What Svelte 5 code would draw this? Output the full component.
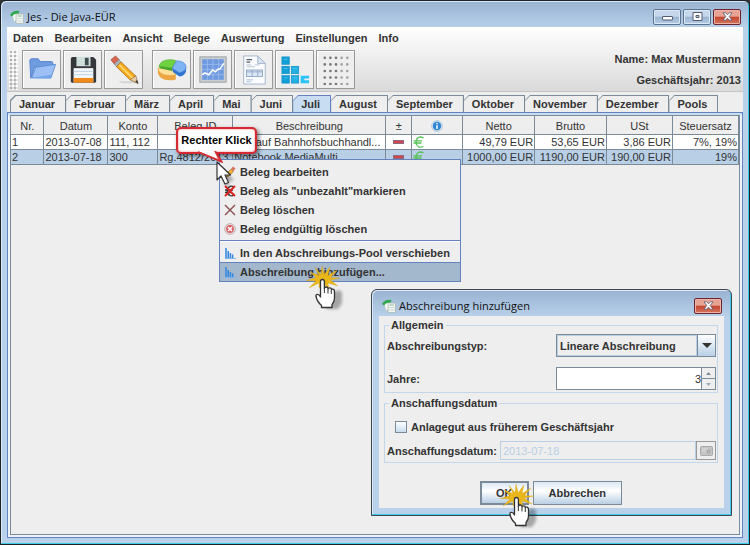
<script lang="ts">
	const menus = ['Daten', 'Bearbeiten', 'Ansicht', 'Belege', 'Auswertung', 'Einstellungen', 'Info'];
	const tabs = [
		'Januar', 'Februar', 'März', 'April', 'Mai', 'Juni', 'Juli',
		'August', 'September', 'Oktober', 'November', 'Dezember', 'Pools'
	];
	let activeTab = $state('Juli');

	const columns = [
		{ title: 'Nr.', width: 33 },
		{ title: 'Datum', width: 64 },
		{ title: 'Konto', width: 50 },
		{ title: 'Beleg ID', width: 75 },
		{ title: 'Beschreibung', width: 153 },
		{ title: '±', width: 26 },
		{ title: 'info', width: 51 },
		{ title: 'Netto', width: 72 },
		{ title: 'Brutto', width: 72 },
		{ title: 'USt', width: 66 },
		{ title: 'Steuersatz', width: 66 }
	];
	const totalWidth = columns.reduce((sum, c) => sum + c.width, 0);

	const rows = [
		{ nr: 1, datum: '2013-07-08', konto: '111, 112', beleg: '', text: 'Einkauf Bahnhofsbuchhandl...', netto: '49,79 EUR', brutto: '53,65 EUR', ust: '3,86 EUR', satz: '7%, 19%' },
		{ nr: 2, datum: '2013-07-18', konto: '300', beleg: 'Rg.4812/2013', text: 'Notebook MediaMulti', netto: '1000,00 EUR', brutto: '1190,00 EUR', ust: '190,00 EUR', satz: '19%' }
	];
	let selected = $state(2);

	let typ = $state('Lineare Abschreibung');
	let jahre = $state(3);
	let frueher = $state(false);
	let datum = $state('2013-07-18');
</script>

{#snippet logo()}
	<svg class="logo" viewBox="0 0 14 14" aria-hidden="true">
		<path d="M2 4 L8 1.5 L10 8 L4 12 Z" fill="#f6faf6" stroke="#b5c8b8" stroke-width=".6" />
		<path d="M0 5 Q3 0 9.5 1 L8.5 4 Q4 3 2 6.5 Z" fill="#2fa84f" />
		<rect x="6" y="4" width="7.5" height="9.5" rx="1" fill="#f1f5f2" stroke="#a5b3ac" stroke-width=".7" />
		<path d="M7.5 6h4.5" stroke="#a9cdb0" stroke-width="1.4" />
		<path d="M7.5 8.500h1M9.500 8.500h1M11.500 8.500h1M7.500 11h1M9.500 11h1M11.500 11h1" stroke="#b5bdb9" />
	</svg>
{/snippet}

{#snippet closeGlyph()}
	<svg width="11" height="9" viewBox="0 0 11 9" aria-hidden="true">
		<path d="M1 .8h2.7l1.8 2 1.8-2H10L7.2 4.5 10 8.2H7.3l-1.8-2-1.8 2H1l2.8-3.7z" fill="#fff" stroke="#555b70" stroke-width=".8" />
	</svg>
{/snippet}

{#snippet bars()}
	<svg viewBox="0 0 12 12" aria-hidden="true">
		<path d="M2 1V11M4.2 4V11M6.4 6V11M8.6 7.5V11" stroke="#2f86e0" stroke-width="1.5" />
		<path d="M1 11.5H12" stroke="#7db4ee" />
	</svg>
{/snippet}

{#snippet clickHand()}
	<svg width="44" height="50" viewBox="0 0 44 50" aria-hidden="true">
		<path d="M16 1l2.2 8.500L24 2l-2 8.500 9-5.500-6.500 7.500L34 13l-9.500 2L32 21l-10-3 1 6-5-5-5 4 0-5-10 5 7-7-10-.5L10 12.500 4 7l9 3.500-4-8 6 7z" fill="#e9b71c" stroke="#d39e10" stroke-width=".3" />
		<path d="M12 33l6 9h11l4-6V25l-4-2z" fill="#000" opacity=".3" filter="blur(1.5px)" transform="translate(3 2)" />
		<path d="M14.500 31V16.500Q14.500 14.500 16.400 14.500T18.400 16.500V23.500Q18.400 22 20.200 22T22 23.800Q22 22.800 23.700 22.800T25.300 24.600Q25.500 23.800 26.900 24.200T28.500 26V33Q28.500 37 26 39.500V42.500H15.500V40.500Q11 36.500 10 31.500Q9.700 29.300 11.500 29.300T14.500 32z" fill="#fff" stroke="#333" stroke-width="1.3" stroke-linejoin="round" />
		<path d="M18.400 23v5M22 24v4.500M25.300 25v4" stroke="#444" stroke-width="1.1" />
	</svg>
{/snippet}

<div class="window">
	<header class="titlebar">
		{@render logo()}
		<h1>Jes - Die Java-EÜR</h1>
		<button class="win-btn" aria-label="Minimieren">
			<svg width="11" height="9" viewBox="0 0 11 9"><rect x=".5" y="4.5" width="10" height="3.5" rx=".5" fill="#fff" stroke="#555b70" /></svg>
		</button>
		<button class="win-btn" aria-label="Maximieren">
			<svg width="11" height="9" viewBox="0 0 11 9"><path d="M1 .5h9v8H1z M4 3.5h3v2H4z" fill="#fff" fill-rule="evenodd" stroke="#555b70" /></svg>
		</button>
		<button class="win-btn close" aria-label="Schließen">{@render closeGlyph()}</button>
	</header>

	<main class="client">
		<div class="top">
			<nav class="menubar">
				{#each menus as m}
					<button>{m}</button>
				{/each}
			</nav>
			<div class="toolbar">
				<span class="grip"></span>
				<div class="tools">
					<button aria-label="Öffnen">
						<svg viewBox="0 0 32 32">
							<path d="M3 6q0-2 2-2h7l2 3h12q1.500 0 1.500 1.500V13H8L4 25z" fill="#6f9be0" stroke="#5583cc" />
							<path d="M5 24L9.500 13l21-3-5 14.500z" fill="#9cc0f5" stroke="#5d8ed8" />
							<path d="M6 24l20-3-1 4H5z" fill="#78a6ea" />
						</svg>
					</button>
					<button aria-label="Speichern">
						<svg viewBox="0 0 32 32">
							<path d="M3 4q0-2 2-2h22l3 3v23q0 1.500-1.500 1.500h-24Q3 29.500 3 28z" fill="#35373b" />
							<rect x="9" y="2" width="15" height="10" fill="#cfe0dc" />
							<rect x="18" y="3" width="4" height="8" fill="#3d4c4c" />
							<rect x="6" y="14" width="21" height="15" fill="#f4f7fa" />
							<path d="M6 17.500h21M6 21h21" stroke="#b9cfe2" />
							<rect x="6" y="24.500" width="21" height="5" fill="#f08a1c" />
						</svg>
					</button>
					<button aria-label="Bearbeiten">
						<svg viewBox="0 0 32 32">
							<path d="M10 28h18l2 2H14z" fill="#bbb" opacity=".5" />
							<path d="M2 5l5-4 4 4-5 5z" fill="#d9664e" stroke="#913b2a" stroke-width=".6" />
							<path d="M5.500 9.500L10.500 5l3 3-5 5z" fill="#aab2b5" stroke="#757b80" stroke-width=".6" />
							<path d="M8 12.500L13 7.500l15.500 15-6 4z" fill="#f5a91e" stroke="#a96908" stroke-width=".8" />
							<path d="M11 10.500l14.500 14.500" stroke="#ffd66e" stroke-width="2" />
							<path d="M22.500 26.500l6-4.500 2.500 8.500z" fill="#e9cda0" stroke="#86633a" stroke-width=".7" />
							<path d="M28 28l2-1 1.200 4z" fill="#222" />
						</svg>
					</button>
				</div>
				<div class="tools">
					<button aria-label="Kreisdiagramm">
						<svg viewBox="0 0 32 32">
							<path d="M1 14v6q3 7 13 7 4 0 6-1v-6z" fill="#eda544" />
							<path d="M1 14q0 7 12 8 5 0 7-1l-4-7z" fill="#ffdf9a" stroke="#e4982c" stroke-width=".6" />
							<path d="M2 12q2-7 12-7 4 0 6 1l-4 8z" fill="#6fd33f" stroke="#3c9e1e" stroke-width=".6" />
							<path d="M2 12l14 2v3l-13-3z" fill="#43a626" />
							<path d="M16 14l5-8q10 1 10 7 0 4-7 6z" fill="#7eb4f3" stroke="#3476cb" stroke-width=".6" />
							<path d="M16 14l8 5q7-2 7-6v4q-1 5-7 6l-7-5z" fill="#2f74d0" />
						</svg>
					</button>
					<button aria-label="Verlauf">
						<svg viewBox="0 0 32 32">
							<rect x="2" y="2" width="28" height="27" fill="#c9cdd1" stroke="#989da2" />
							<rect x="4.500" y="4.500" width="23" height="22" fill="#6f9ae0" />
							<path d="M4.500 10h23M4.500 15.500h23M4.500 21h23M10 4.500v22M16 4.500v22M22 4.500v22" stroke="#a8c5f2" stroke-width=".7" />
							<path d="M4.500 21l3-2 4 2 4-5 3 2 3-3 2 0 4-6" fill="none" stroke="#fff" stroke-width="1.600" />
						</svg>
					</button>
					<button aria-label="Bericht">
						<svg viewBox="0 0 32 32">
							<path d="M5 1h15l8 8v22H5z" fill="#fafcff" stroke="#a2b3ca" />
							<path d="M20 1v8h8z" fill="#dbe4ef" stroke="#a2b3ca" />
							<path d="M8 5h6M8 7.500h4" stroke="#555e6b" stroke-width="1.300" />
							<path d="M8 10.500h5M17 10.500h5M8 12.500h9" stroke="#b6c3d4" />
							<rect x="8" y="16" width="17" height="7" fill="#dce8f5" stroke="#91a8c5" />
							<path d="M8 18h17M14 16v7M20 16v7" stroke="#91a8c5" />
							<path d="M8 26.500h7M8 28.500h5" stroke="#a8bdd6" />
						</svg>
					</button>
					<button aria-label="Abschreibungen">
						<svg viewBox="0 0 32 32">
							<g fill="#129fd6" stroke="#0b86bd" stroke-width=".6">
								<rect x="2" y="2" width="8" height="8" />
								<rect x="2" y="12" width="8" height="8" />
								<rect x="2" y="22" width="8" height="8" />
								<rect x="12" y="12" width="8" height="8" fill="#22b0e4" />
								<rect x="12" y="22" width="8" height="8" fill="#22b0e4" />
							</g>
							<path d="M31 22h-9v8h9v-3h-5v-2h5z" fill="#2cc4f6" />
							<path d="M4 4.500h4M4 14.500h4M4 24.500h4M14 14.500h4M14 24.500h4" stroke="#4cc3ee" />
						</svg>
					</button>
					<button aria-label="Raster">
						<svg viewBox="0 0 32 32">
							{#each [4, 11, 18, 25, 32] as y}
								{#each [4, 10, 16, 22, 28] as x}
									<circle cx={x} cy={y - 1} r="1.400" fill={x < 17 ? '#777' : '#a2a2a2'} />
								{/each}
							{/each}
						</svg>
					</button>
				</div>
				<div class="mandant">
					<span>Name: Max Mustermann</span>
					<span>Geschäftsjahr: 2013</span>
				</div>
			</div>
		</div>

		<div class="tabs" role="tablist">
			{#each tabs as t}
				<button role="tab" aria-selected={activeTab === t} class:active={activeTab === t} onclick={() => (activeTab = t)}><span>{t}</span></button>
			{/each}
		</div>

		<section class="panel">
			<div class="sheet">
				<table>
					<colgroup>
						{#each columns as c}
							<col style="width: {(c.width / totalWidth) * 100}%" />
						{/each}
					</colgroup>
					<thead>
						<tr>
							{#each columns as c}
								<th>
									{#if c.title === 'info'}
										<svg class="info" viewBox="0 0 12 12" role="img" aria-label="Info">
											<circle cx="6" cy="6" r="5.4" fill="#d5e4f3" stroke="#a8bccf" stroke-width=".7" />
											<circle cx="6" cy="6" r="4.2" fill="#2f86d6" />
											<path d="M6 3v1.300M6 5.200v3.800" stroke="#fff" stroke-width="1.5" />
										</svg>
									{:else}
										{c.title}
									{/if}
								</th>
							{/each}
						</tr>
					</thead>
					<tbody>
						{#each rows as r}
							<tr class:selected={selected === r.nr} onclick={() => (selected = r.nr)}>
								<td>{r.nr}</td>
								<td>{r.datum}</td>
								<td>{r.konto}</td>
								<td>{r.beleg}</td>
								<td>{r.text}</td>
								<td class="sign"><svg width="11" height="4" viewBox="0 0 11 4"><rect x=".5" y=".5" width="10" height="3" fill="#d2454c" stroke="#8d6a80" /></svg></td>
								<td class="euro">
									<svg width="12" height="12" viewBox="0 0 12 12"><path d="M10.500 1.800Q5.500-.5 3.500 4 2 8.500 5.500 10.800 8 11.700 10.500 10.200M.5 4.800h8.500M.5 7h8" fill="none" stroke="#55c257" stroke-width="1.3" /></svg>
								</td>
								<td class="num">{r.netto}</td>
								<td class="num">{r.brutto}</td>
								<td class="num">{r.ust}</td>
								<td class="num">{r.satz}</td>
							</tr>
						{/each}
					</tbody>
				</table>
			</div>
		</section>
	</main>

	<div class="popup" role="menu">
		<button role="menuitem">
			<svg viewBox="0 0 12 12"><path d="M1 11l1-3 5-5 2.500 2.500-5 5z" fill="#f2b13a" stroke="#8d6a2b" stroke-width=".6" /><path d="M7 3l2-2.500 2.500 2L9.500 5z" fill="#d9705a" /></svg>
			Beleg bearbeiten
		</button>
		<button role="menuitem">
			<svg viewBox="0 0 12 12"><path d="M10.500 2Q5.500-.5 3.500 4.500 2.500 9 6 10.500 8 11.500 10.500 10M1 5h8M1 7.500h7" fill="none" stroke="#333" stroke-width="1.3" /><path d="M1 1l10 10M11 1L1 11" stroke="#e02020" stroke-width="1.8" /></svg>
			Beleg als "unbezahlt"markieren
		</button>
		<button role="menuitem">
			<svg viewBox="0 0 12 12"><path d="M1 1l10 10M11 1L1 11" stroke="#8b4a4e" stroke-width="1.4" /></svg>
			Beleg löschen
		</button>
		<button role="menuitem">
			<svg viewBox="0 0 12 12"><circle cx="6" cy="6" r="5.3" fill="#eee" stroke="#b49a9a" stroke-width=".8" /><circle cx="6" cy="6" r="3.9" fill="#d85c62" /><path d="M4 4l4 4M8 4L4 8" stroke="#fff" stroke-width="1.6" /></svg>
			Beleg endgültig löschen
		</button>
		<hr />
		<button role="menuitem">{@render bars()} In den Abschreibungs-Pool verschieben</button>
		<button role="menuitem" class="hot">{@render bars()} Abschreibung hinzufügen...</button>
	</div>

	<div class="callout">
		Rechter Klick
		<svg width="26" height="12" viewBox="0 0 26 12" aria-hidden="true">
			<path d="M1 0L25 11 19 0z" fill="#e04848" />
			<path d="M1 0L21 8 17 0z" fill="#fff" />
			<path d="M1 1L25 11 19 1" fill="none" stroke="#d62a32" stroke-width="1.5" />
		</svg>
	</div>

	<svg class="arrow" width="20" height="30" viewBox="0 0 20 30" aria-hidden="true">
		<path d="M4 5l14 14-6 2 2 7-5-4z" fill="#000" opacity=".3" filter="blur(1.5px)" />
		<path d="M1 1v18l4-4 4 8 3.500-1.500-3.500-7.500H14.500z" fill="#fff" stroke="#333" stroke-width="1.2" stroke-linejoin="round" />
	</svg>

	<div class="pointer">{@render clickHand()}</div>

	<div class="dialog" role="dialog" aria-labelledby="dlg-title">
		<header class="titlebar">
			{@render logo()}
			<h2 id="dlg-title">Abschreibung hinzufügen</h2>
			<button class="win-btn close" aria-label="Schließen">{@render closeGlyph()}</button>
		</header>
		<form class="dialog-body" onsubmit={(e) => e.preventDefault()}>
			<fieldset>
				<legend>Allgemein</legend>
				<div class="field">
					<label for="typ">Abschreibungstyp:</label>
					<span class="combo">
						<select id="typ" bind:value={typ}>
							<option>Lineare Abschreibung</option>
						</select>
						<span class="drop"><svg width="10" height="5" viewBox="0 0 10 5"><path d="M0 0h10L5 5z" fill="#333" /></svg></span>
					</span>
				</div>
				<div class="field">
					<label for="jahre">Jahre:</label>
					<span class="spinner">
						<input id="jahre" type="number" bind:value={jahre} />
						<span class="steps">
							<button type="button" aria-label="Mehr" onclick={() => jahre++}><svg width="5" height="3" viewBox="0 0 5 3"><path d="M0 3h5L2.500 0z" fill="#7a8a99" /></svg></button>
							<button type="button" aria-label="Weniger" onclick={() => jahre--}><svg width="5" height="3" viewBox="0 0 5 3"><path d="M0 0h5L2.500 3z" fill="#9aa8b5" /></svg></button>
						</span>
					</span>
				</div>
			</fieldset>
			<fieldset>
				<legend>Anschaffungsdatum</legend>
				<label class="check"><input type="checkbox" bind:checked={frueher} /> Anlagegut aus früherem Geschäftsjahr</label>
				<div class="date">
					<label for="datum">Anschaffungsdatum:</label>
					<input id="datum" type="text" bind:value={datum} disabled={!frueher} />
					<button type="button" aria-label="Kalender" disabled={!frueher}>
						<svg width="13" height="10" viewBox="0 0 13 10"><rect x=".5" y=".5" width="12" height="9" rx="1" fill="#c4c4c4" stroke="#aaa" /><path d="M2 3h6M2 5h4" stroke="#ddd" /><circle cx="8.500" cy="5.500" r="1.500" fill="none" stroke="#999" /></svg>
					</button>
				</div>
			</fieldset>
			<div class="actions">
				<button type="submit" class="ok">OK</button>
				<button type="button" class="cancel">Abbrechen</button>
			</div>
		</form>
		<div class="pointer">{@render clickHand()}</div>
	</div>
</div>

<style>
	:global(body) {
		margin: 0;
		background: #333;
	}

	.window, .window button, .window input, .window select {
		font-family: "Liberation Sans", Arial, sans-serif;
		font-size: 11px;
		font-weight: bold;
		color: #333;
	}
	.window * {
		box-sizing: border-box;
	}

	.window {
		position: relative;
		display: flex;
		flex-direction: column;
		box-sizing: border-box;
		min-height: 100vh;
		padding: 0 6px 6px;
		border: 1px solid #1c2226;
		border-radius: 6px 6px 0 0;
		background: linear-gradient(#98b2d1, #b9d1ea 27px);
		box-shadow: inset -1px -1px #3fcbe6, inset 1px 1px #d8e8f6;
	}

	.titlebar {
		display: flex;
		align-items: center;
		gap: 2px;
		height: 26px;
		padding: 5px 2px 0 3px;
	}
	.titlebar h1, .titlebar h2 {
		flex: 1;
		margin: 0 0 0 1px;
		font: 11px "Open Sans", "Noto Sans", sans-serif;
		line-height: 16px;
		color: #111;
	}
	.logo {
		width: 14px;
		height: 14px;
	}
	.window .win-btn {
		display: flex;
		align-items: center;
		justify-content: center;
		width: 28px;
		height: 16px;
		padding: 0;
		border: 1px solid #5d7390;
		border-radius: 2px;
		background: linear-gradient(#c5d7ea 45%, #9ab4d1 50%, #b5cde6);
		box-shadow: inset 0 0 0 1px #dbe8f5;
	}
	.window .win-btn.close {
		border-color: #6b2430;
		background: linear-gradient(#e7a394 45%, #c4452f 50%, #d47560);
		box-shadow: inset 0 0 0 1px #eab3a6;
	}

	.client {
		flex: 1;
		display: flex;
		flex-direction: column;
		background: #eee;
	}
	.top {
		background: linear-gradient(#fff, #dadada);
		border-bottom: 1px solid #c4c4c4;
	}
	.menubar {
		display: flex;
		height: 21px;
		padding-left: 1px;
	}
	.menubar button {
		padding: 0 6px 0 5px;
		border: 0;
		background: none;
	}

	.toolbar {
		display: flex;
		align-items: center;
		gap: 9px;
		height: 43px;
		padding: 0 2px;
	}
	.grip {
		width: 9px;
		height: 40px;
		margin-right: -5px;
		background: radial-gradient(circle, #b4b4b4 1px, transparent 1px) 0 0 / 4px 4px, radial-gradient(circle, #fff 1px, transparent 1px) 2px 2px / 4px 4px;
	}
	.tools {
		display: flex;
		gap: 2px;
	}
	.tools button {
		display: flex;
		align-items: center;
		justify-content: center;
		width: 39px;
		height: 39px;
		padding: 0;
		border: 1px solid #999;
		background: #eee;
		box-shadow: inset 1px 1px #fff;
	}
	.tools svg {
		width: 30px;
		height: 30px;
	}
	.mandant {
		display: flex;
		flex-direction: column;
		flex: 1;
		gap: 7px;
		text-align: right;
		line-height: 14px;
	}

	.tabs {
		display: flex;
		height: 20px;
		padding: 3px 3px 0;
	}
	.tabs button {
		position: relative;
		padding: 0 10px 0 9px;
		border: solid #7a8a99;
		border-width: 0 1px 0 0;
		background: #7a8a99;
		clip-path: polygon(0 5px, 5px 0, 100% 0, 100% 100%, 0 100%);
	}
	.tabs button + button {
		padding-left: 8px;
	}
	.tabs button::before {
		content: "";
		position: absolute;
		inset: 1px 0 0 1px;
		background: #eee;
		clip-path: polygon(0 5px, 5px 0, 100% 0, 100% 100%, 0 100%);
	}
	.tabs button + button::before {
		left: 0;
	}
	.tabs button.active {
		background: #6382bf;
		border-color: #6382bf;
	}
	.tabs button.active::before {
		background: #c8ddf2;
	}
	.tabs span {
		position: relative;
	}

	.panel {
		flex: 1;
		display: flex;
		flex-direction: column;
		padding: 2px;
		border: 1px solid #6382bf;
		background: linear-gradient(#c8ddf2 2px, #eef3f8 2px);
	}
	.sheet {
		flex: 1;
		border: 1px solid #7a8a99;
		background: #eee;
	}
	table {
		width: 100%;
		table-layout: fixed;
		border-collapse: collapse;
	}
	th, td {
		overflow: hidden;
		padding: 0 1px;
		border-right: 1px solid #7a8a99;
		border-bottom: 1px solid #7a8a99;
		font-size: 11px;
		font-weight: normal;
		line-height: 14px;
		white-space: nowrap;
	}
	th {
		height: 18px;
		padding-top: 2px;
	}
	td {
		height: 15px;
	}
	tbody tr {
		background: #fff;
	}
	tbody tr.selected {
		background: #b8cfe5;
	}
	th svg, td svg {
		display: block;
	}
	.info {
		width: 12px;
		height: 12px;
		margin: 0 auto;
	}
	.sign svg {
		margin: 0 auto;
	}
	.num {
		text-align: right;
	}

	.popup {
		position: absolute;
		top: 158px;
		left: 218px;
		width: 242px;
		padding: 2px 0 0;
		border: 1px solid #6382bf;
		background: #eee;
	}
	.popup button {
		display: flex;
		align-items: center;
		gap: 4px;
		width: 100%;
		height: 19px;
		padding: 0 4px;
		border: 0;
		background: none;
		white-space: nowrap;
	}
	.popup svg {
		width: 12px;
		height: 12px;
	}
	.popup hr {
		margin: 2px 0 1px;
		border: 0;
		border-top: 1px solid #6382bf;
		border-bottom: 1px solid #fff;
	}
	.popup .hot {
		background: #a3b8cc;
		box-shadow: inset 0 1px #6382bf;
	}

	.callout {
		position: absolute;
		top: 126px;
		left: 175px;
		width: 81px;
		border: 2px solid #d62a32;
		border-radius: 5px;
		background: #fff;
		box-shadow: inset 0 0 2px #e66, 2px 2px 4px #0008;
		line-height: 23px;
		text-align: center;
		color: #000;
	}
	.callout svg {
		position: absolute;
		top: 22px;
		left: 19px;
	}
	.arrow {
		position: absolute;
		top: 160px;
		left: 215px;
	}
	.pointer {
		position: absolute;
		top: 264px;
		left: 305px;
	}

	.dialog {
		position: absolute;
		top: 288px;
		left: 370px;
		width: 361px;
		padding: 0 7px 7px;
		border: 1px solid #3d4850;
		border-radius: 6px 6px 0 0;
		background: linear-gradient(#98b2d1, #b9d1ea 27px);
		box-shadow: inset -1px -1px #3fcbe6, inset 1px 1px #d8e8f6;
	}
	.dialog .pointer {
		top: 193px;
		left: 128px;
	}
	.dialog-body {
		padding: 3px 6px 3px 5px;
		background: #eee;
	}
	fieldset {
		display: flex;
		flex-direction: column;
		gap: 7px;
		min-width: 0;
		margin: 0 0 4px;
		padding: 2px 1px;
		border: 1px solid #c3d7ec;
	}
	legend {
		margin-left: 3px;
		padding: 0 2px;
		line-height: 13px;
	}
	.field {
		display: flex;
		align-items: center;
		justify-content: space-between;
		padding-left: 1px;
	}
	.field + .field {
		margin-top: 3px;
	}
	.combo, .spinner {
		display: flex;
		width: 160px;
		height: 23px;
		border: 1px solid #7a8a99;
	}
	.combo select {
		flex: 1;
		min-width: 0;
		padding: 0 2px;
		border: 1px solid #b8cfe5;
		border-radius: 0;
		background: #eee;
		appearance: none;
	}
	.drop {
		display: flex;
		align-items: center;
		justify-content: center;
		width: 18px;
		border-left: 1px solid #7a8a99;
		background: linear-gradient(#fff, #b8cfe5);
		pointer-events: none;
	}
	.spinner input {
		flex: 1;
		min-width: 0;
		padding: 0;
		border: 0;
		background: #fff;
		font-weight: normal;
		text-align: right;
		appearance: textfield;
	}
	.spinner input::-webkit-inner-spin-button {
		display: none;
	}
	.steps {
		display: flex;
		flex-direction: column;
		width: 14px;
		border-left: 1px solid #7a8a99;
	}
	.steps button {
		display: flex;
		flex: 1;
		align-items: center;
		justify-content: center;
		padding: 0;
		border: 0;
		background: #eee;
	}
	.steps button + button {
		border-top: 1px solid #7a8a99;
	}
	.check {
		display: flex;
		align-items: center;
		gap: 4px;
		height: 14px;
		margin: 8px 0 0 9px;
	}
	.check input {
		width: 12px;
		height: 12px;
		margin: 0;
		border: 1px solid #7a8a99;
		background: linear-gradient(#fff, #c8dced);
		appearance: none;
	}
	.check input:checked {
		background: #6382bf;
	}
	.date {
		display: flex;
		align-items: center;
		height: 19px;
		padding-left: 1px;
	}
	.date input {
		flex: 1;
		min-width: 0;
		height: 19px;
		margin-left: 3px;
		padding: 0 2px;
		border: 1px solid #b8cfe5;
		background: #eee;
		font-weight: normal;
	}
	.date input:disabled {
		color: #b8cfe5;
	}
	.date button {
		display: flex;
		align-items: center;
		justify-content: center;
		width: 20px;
		height: 19px;
		padding: 0;
		border: 1px solid #999;
		background: #eee;
	}
	.actions {
		display: flex;
		justify-content: center;
		gap: 4px;
		padding-top: 14px;
	}
	.actions button {
		height: 24px;
		border: 1px solid #7a8a99;
		background: linear-gradient(#dde8f3, #fff 40%, #b8cfe5);
	}
	.actions .ok {
		padding: 0 14px;
		border-width: 2px;
	}
	.actions .cancel {
		padding: 0 15px;
	}
</style>
